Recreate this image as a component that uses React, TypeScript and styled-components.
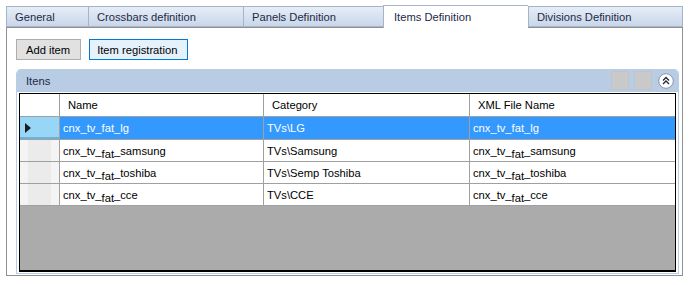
import React from 'react';
import styled, { createGlobalStyle } from 'styled-components';

const GlobalStyle = createGlobalStyle`
  body {
    margin: 0;
    background: #ffffff;
    font-family: 'Liberation Sans', Arial, sans-serif;
    font-size: 11.2px;
  }
`;

const Page = styled.div`
  padding: 6px 0 0 6px;
  width: 690px;
  height: 285px;
  box-sizing: border-box;
`;

const TabStrip = styled.div`
  display: flex;
  height: 21px;
  align-items: flex-end;
`;

const Tab = styled.div<{ $w: number; $active?: boolean }>`
  box-sizing: border-box;
  width: ${({ $w }) => $w}px;
  height: ${({ $active }) => ($active ? 23 : 21)}px;
  margin-bottom: ${({ $active }) => ($active ? -1 : 0)}px;
  padding-left: ${({ $active }) => ($active ? 10 : 8)}px;
  display: flex;
  align-items: center;
  color: #1c2a47;
  border: 1px solid #a6b4c8;
  border-bottom: ${({ $active }) => ($active ? 'none' : '1px solid #a6b4c8')};
  border-right: none;
  background: ${({ $active }) =>
    $active ? '#ffffff' : 'linear-gradient(#e6edf6, #c9d7ea)'};
  position: relative;
  z-index: ${({ $active }) => ($active ? 1 : 0)};
  &:last-child {
    border-right: 1px solid #a6b4c8;
  }
`;

const Frame = styled.div`
  box-sizing: border-box;
  width: 677px;
  height: 249px;
  border: 1px solid #8e9196;
  padding: 11px 3px 1px 9px;
  display: flex;
  flex-direction: column;
  gap: 9px;
`;

const Toolbar = styled.div`
  display: flex;
  gap: 8px;
`;

const Button = styled.button<{ $focused?: boolean }>`
  font: inherit;
  color: #000;
  height: 21px;
  box-sizing: border-box;
  padding: 0 10px 0 ${({ $focused }) => ($focused ? 7 : 9)}px;
  border: 1px solid ${({ $focused }) => ($focused ? '#0078d7' : '#adadad')};
  background: ${({ $focused }) => ($focused ? '#e5f1fb' : '#e1e1e1')};
  display: flex;
  align-items: center;
`;

const Panel = styled.div`
  flex: 1;
  display: flex;
  flex-direction: column;
  border: 1px solid #b9cde6;
  border-top: none;
  border-radius: 5px 5px 0 0;
  overflow: hidden;
  width: 663px;
  box-sizing: border-box;
`;

const PanelHeader = styled.div`
  height: 23px;
  background: #b8cce4;
  display: flex;
  align-items: center;
  padding: 0 4px 0 9px;
  color: #1c2a47;
`;

const PanelTitle = styled.div`
  flex: 1;
`;

const HeaderSquare = styled.div`
  width: 18px;
  height: 19px;
  box-sizing: border-box;
  background: #c9c9c9;
  border: 1px solid #c0c5cc;
  margin-right: 5px;
`;

const CollapseButton = styled.div`
  width: 16px;
  height: 16px;
  margin-left: 1px;
  display: flex;
  align-items: center;
  justify-content: center;
`;

const PanelBody = styled.div`
  flex: 1;
  background: #ffffff;
  padding: 1px 2px 1px 2px;
  display: flex;
`;

const Grid = styled.div`
  flex: 1;
  border: 1px solid #000;
  border-bottom-width: 2px;
  background: #ababab;
  display: flex;
  flex-direction: column;
`;

const Row = styled.div<{ $selected?: boolean }>`
  display: grid;
  grid-template-columns: 40px 204px 206px 1fr;
  height: ${({ $selected }) => ($selected ? 23 : 22)}px;
  box-sizing: border-box;
  background: ${({ $selected }) => ($selected ? '#3399ff' : '#ffffff')};
  color: ${({ $selected }) => ($selected ? '#ffffff' : '#000000')};
  border-bottom: 1px solid #a0a0a0;
`;

const HeaderRow = styled(Row)`
  height: 23px;
  background: #ffffff;
  color: #000;
`;

const RowHeader = styled.div<{ $selected?: boolean }>`
  border-right: 1px solid #a0a0a0;
  background: ${({ $selected }) =>
    $selected ? '#97d6f6' : 'linear-gradient(90deg, #f4f4f4 0 20%, #ebebeb 20% 80%, #f4f4f4 80%)'};
  box-shadow: ${({ $selected }) => ($selected ? 'inset 0 -2px 0 #6bb3d6' : 'none')};
  display: flex;
  align-items: center;
  padding-left: 5px;
`;

const Corner = styled.div`
  border-right: 1px solid #a0a0a0;
`;

const Cell = styled.div<{ $head?: boolean }>`
  display: flex;
  align-items: center;
  padding-left: ${({ $head }) => ($head ? 8 : 3)}px;
  border-right: 1px solid #a0a0a0;
  white-space: nowrap;
  overflow: hidden;
  line-height: 14px;
  &:last-child {
    border-right: none;
  }
`;

const Low = styled.span`
  display: inline-block;
  transform: translateY(3px);
`;

const Triangle = () => (
  <svg width="6" height="10" viewBox="0 0 6 10">
    <path d="M0 0 L6 5 L0 10 Z" fill="#1a1a1a" />
  </svg>
);

const Collapse = () => (
  <svg width="16" height="16" viewBox="0 0 16 16">
    <circle cx="8" cy="8" r="7.3" fill="#ffffff" stroke="#8a96a8" strokeWidth="1" />
    <path d="M5 7.5 L8 4.5 L11 7.5 M5 11 L8 8 L11 11" fill="none" stroke="#1c2a47" strokeWidth="1.4" />
  </svg>
);

const FileName = ({ name, low }: { name: string; low: boolean }) =>
  low ? (
    <span>
      cnx_tv_<Low>fat</Low>_{name}
    </span>
  ) : (
    <span>cnx_tv_fat_{name}</span>
  );

const items = [
  { name: 'lg', category: 'TVs\\LG' },
  { name: 'samsung', category: 'TVs\\Samsung' },
  { name: 'toshiba', category: 'TVs\\Semp Toshiba' },
  { name: 'cce', category: 'TVs\\CCE' },
];

const tabs = [
  { label: 'General', w: 82 },
  { label: 'Crossbars definition', w: 155 },
  { label: 'Panels Definition', w: 140 },
  { label: 'Items Definition', w: 145, active: true },
  { label: 'Divisions Definition', w: 155 },
];

export default function App() {
  return (
    <Page>
      <GlobalStyle />
      <TabStrip>
        {tabs.map((t) => (
          <Tab key={t.label} $w={t.w} $active={t.active}>
            {t.label}
          </Tab>
        ))}
      </TabStrip>
      <Frame>
        <Toolbar>
          <Button>Add item</Button>
          <Button $focused>Item registration</Button>
        </Toolbar>
        <Panel>
          <PanelHeader>
            <PanelTitle>Itens</PanelTitle>
            <HeaderSquare />
            <HeaderSquare />
            <CollapseButton>
              <Collapse />
            </CollapseButton>
          </PanelHeader>
          <PanelBody>
            <Grid>
              <HeaderRow>
                <Corner />
                <Cell $head>Name</Cell>
                <Cell $head>Category</Cell>
                <Cell $head>XML File Name</Cell>
              </HeaderRow>
              {items.map((it, i) => (
                <Row key={it.name} $selected={i === 0}>
                  <RowHeader $selected={i === 0}>{i === 0 && <Triangle />}</RowHeader>
                  <Cell>
                    <FileName name={it.name} low={i > 0} />
                  </Cell>
                  <Cell>{it.category}</Cell>
                  <Cell>
                    <FileName name={it.name} low={i > 0} />
                  </Cell>
                </Row>
              ))}
            </Grid>
          </PanelBody>
        </Panel>
      </Frame>
    </Page>
  );
}
